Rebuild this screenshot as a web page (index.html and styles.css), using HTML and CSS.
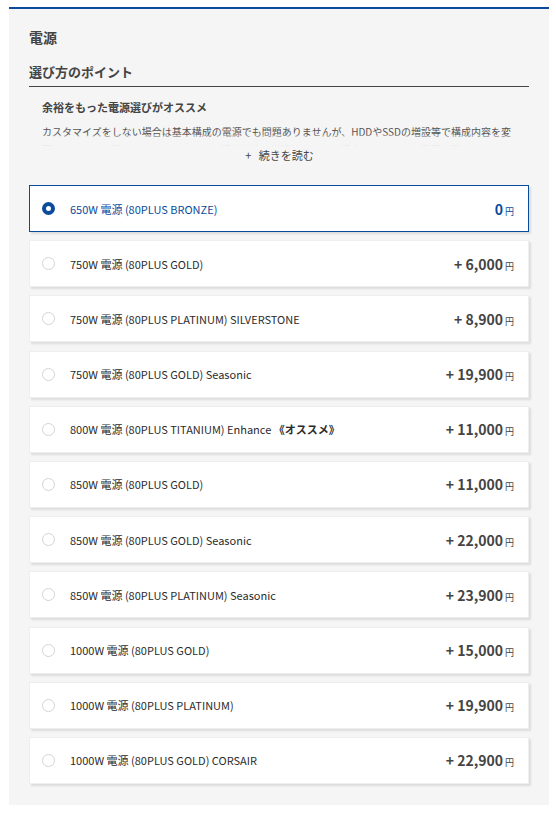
FILE: index.html
```html
<!DOCTYPE html>
<html lang="ja">
<head>
<meta charset="utf-8">
<link rel="stylesheet" href="styles.css">
</head>
<body>
<section class="panel">
  <h1 class="title">電源</h1>
  <h2 class="subtitle">選び方のポイント</h2>
  <div class="point">
    <h3 class="point-head">余裕をもった電源選びがオススメ</h3>
    <div class="point-body">
      <p>カスタマイズをしない場合は基本構成の電源でも問題ありませんが、HDDやSSDの増設等で構成内容を変更すると、使用電力も大きくなります。記憶媒体の増設等をされる場合は、一つ上の電源容量のものをオススメします。</p>
      <div class="fade"></div>
    </div>
    <div class="more">+&nbsp;&nbsp;&nbsp;続きを読む</div>
  </div>
  <ul class="options">
    <li class="opt selected"><span class="radio"></span><span class="name">650W 電源 (80PLUS BRONZE)</span><span class="price">0<small>円</small></span></li>
    <li class="opt"><span class="radio"></span><span class="name">750W 電源 (80PLUS GOLD)</span><span class="price">+ 6,000<small>円</small></span></li>
    <li class="opt"><span class="radio"></span><span class="name">750W 電源 (80PLUS PLATINUM) SILVERSTONE</span><span class="price">+ 8,900<small>円</small></span></li>
    <li class="opt"><span class="radio"></span><span class="name">750W 電源 (80PLUS GOLD) Seasonic</span><span class="price">+ 19,900<small>円</small></span></li>
    <li class="opt"><span class="radio"></span><span class="name">800W 電源 (80PLUS TITANIUM) Enhance <b>《オススメ》</b></span><span class="price">+ 11,000<small>円</small></span></li>
    <li class="opt"><span class="radio"></span><span class="name">850W 電源 (80PLUS GOLD)</span><span class="price">+ 11,000<small>円</small></span></li>
    <li class="opt"><span class="radio"></span><span class="name">850W 電源 (80PLUS GOLD) Seasonic</span><span class="price">+ 22,000<small>円</small></span></li>
    <li class="opt"><span class="radio"></span><span class="name">850W 電源 (80PLUS PLATINUM) Seasonic</span><span class="price">+ 23,900<small>円</small></span></li>
    <li class="opt"><span class="radio"></span><span class="name">1000W 電源 (80PLUS GOLD)</span><span class="price">+ 15,000<small>円</small></span></li>
    <li class="opt"><span class="radio"></span><span class="name">1000W 電源 (80PLUS PLATINUM)</span><span class="price">+ 19,900<small>円</small></span></li>
    <li class="opt"><span class="radio"></span><span class="name">1000W 電源 (80PLUS GOLD) CORSAIR</span><span class="price">+ 22,900<small>円</small></span></li>
  </ul>
</section>
</body>
</html>
```

FILE: styles.css
```css
* { box-sizing: border-box; }
html, body { margin: 0; padding: 0; background: #fff; }
body {
  font-family: "Noto Sans CJK JP", "Noto Sans", sans-serif;
  color: #333;
}
.panel {
  margin: 7px 0 0 9px;
  width: 540px;
  background: #f5f5f5;
  border-top: 2px solid #0a4b9c;
  padding: 18px 20px 21px 20px;
}
.title {
  margin: 0;
  font-size: 14px;
  line-height: 20px;
  font-weight: 700;
  color: #444;
}
.subtitle {
  margin: 15px 0 0;
  font-size: 13px;
  line-height: 20px;
  font-weight: 700;
  color: #444;
  padding-bottom: 4px;
  border-bottom: 1px solid #444;
}
.point {
  padding: 0 12px 0 13px;
}
.point-head {
  margin: 12px 0 0;
  font-size: 11px;
  line-height: 16px;
  font-weight: 700;
  color: #444;
}
.point-body {
  position: relative;
  margin-top: 8px;
  height: 23px;
  overflow: hidden;
}
.point-body p {
  margin: 0;
  font-size: 10px;
  line-height: 18px;
  color: #555;
  letter-spacing: 0;
}
.fade {
  position: absolute;
  left: 0; right: 0; top: 12px; bottom: 0;
  background: linear-gradient(to bottom, rgba(245,245,245,0.3), rgba(245,245,245,0.95));
}
.more {
  text-align: center;
  font-size: 11px;
  line-height: 16px;
  color: #444;
  margin-top: 1px;
}
.options {
  list-style: none;
  margin: 22px 0 0;
  padding: 0;
  display: flex;
  flex-direction: column;
  gap: 8.2px;
}
.opt {
  height: 47px;
  display: flex;
  align-items: center;
  background: #fff;
  border: 1px solid #eee;
  box-shadow: 2px 2px 2px rgba(0,0,0,0.1);
  padding: 0 14px 0 12px;
}
.opt.selected {
  border-color: #0a4b9c;
}
.radio {
  width: 13px;
  height: 13px;
  border-radius: 50%;
  border: 1px solid #d4d4d4;
  background: #fff;
  flex: none;
}
.selected .radio {
  border: 4px solid #0a4b9c;
}
.name {
  margin-left: 15px;
  font-size: 11px;
  font-weight: 400;
  color: #2b2b2b;
  flex: 1;
}
.name b { font-weight: 700; }
.selected .name, .selected .price { color: #0a4b9c; }
.price {
  font-size: 14px;
  font-weight: 700;
  color: #444;
}
.price small {
  font-size: 9px;
  font-weight: 400;
  margin-left: 2px;
}
```
